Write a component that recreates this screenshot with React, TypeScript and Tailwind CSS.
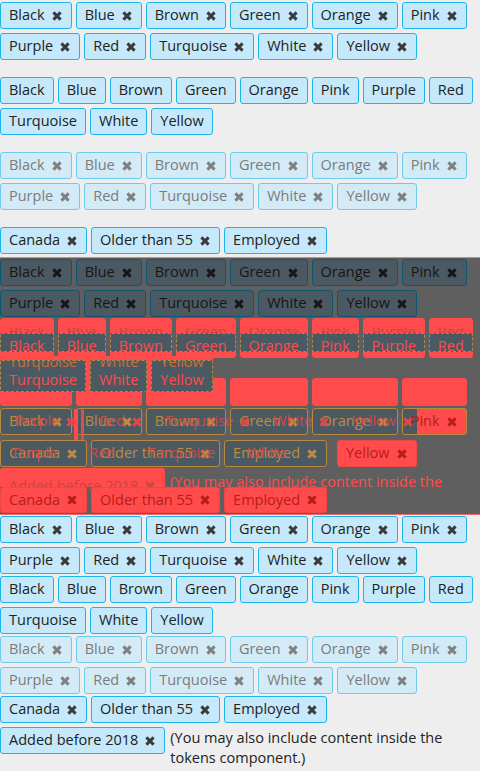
import React from "react";

const COLORS = ["Black", "Blue", "Brown", "Green", "Orange", "Pink", "Purple", "Red", "Turquoise", "White", "Yellow"];
const FILTERS = ["Canada", "Older than 55", "Employed"];

function XIcon({ color }: { color: string }) {
  return (
    <svg width="10" height="10" viewBox="0 0 10 10" className="shrink-0">
      <path d="M1.4 1.4 L8.6 8.6 M8.6 1.4 L1.4 8.6" stroke={color} strokeWidth="2.9" strokeLinecap="butt" />
    </svg>
  );
}

const NORMAL = "bg-[#c5e9fb] border-[#1cb4ec] text-[#222222]";
const DISABLED = "bg-[#d3ebf7] border-[#6ccbef] text-[#7b7b7b]";
const DARK = "bg-[#4b5962] border-[#0c5872] text-[#161616]";
const RED = "bg-[#ff4b4b] border-[#f04646] text-[#b81c1c]";

function Token({
  label,
  x,
  cls = NORMAL,
  icon = "#3a3a3a",
  h = "h-[27px]",
}: {
  label: string;
  x?: boolean;
  cls?: string;
  icon?: string;
  h?: string;
}) {
  return (
    <div className={`inline-flex shrink-0 items-center whitespace-nowrap border rounded-[3px] pl-2 ${x ? "pr-[9px]" : "pr-2"} text-[14.5px] leading-none ${h} ${cls}`}>
      <span>{label}</span>
      {x && (
        <span className="ml-[7px] flex">
          <XIcon color={icon} />
        </span>
      )}
    </div>
  );
}

function List({
  items,
  x,
  cls,
  icon,
  className = "",
}: {
  items: string[];
  x?: boolean;
  cls?: string;
  icon?: string;
  className?: string;
}) {
  return (
    <div className={`flex flex-wrap gap-x-[4px] gap-y-[4px] ${className}`}>
      {items.map((c) => (
        <Token key={c} label={c} x={x} cls={cls} icon={icon} />
      ))}
    </div>
  );
}

/* a band: a token-shaped box showing only part of its text */
function Band({ label, x, h, textCls, pt, faded }: { label: string; x?: boolean; h: string; textCls: string; pt: string; faded?: string }) {
  return (
    <div className={`relative shrink-0 overflow-hidden border border-dashed border-[#b8893c] bg-[#4b5962] rounded-[2px] pl-2 ${x ? "pr-[9px]" : "pr-2"} text-[14.5px] leading-none whitespace-nowrap ${h}`}>
      <div className={`flex items-center ${pt} ${textCls}`}>
        <span>{label}</span>
        {x && (
          <span className="ml-[7px] flex">
            <XIcon color="#ff4b4b" />
          </span>
        )}
      </div>
      {faded && <div className={`absolute left-2 ${faded}`}>{label}</div>}
    </div>
  );
}

function Overlay() {
  const row1 = COLORS.slice(0, 8);
  return (
    <div className="relative mt-[3px] h-[258px] bg-[#5f5f5f] border-t border-t-[#d98c3c] border-b border-b-[#e86a6a] overflow-hidden">
      {/* faded copy of the first list */}
      <List items={COLORS} x cls={DARK} icon="#161616" className="pt-[1px]" />

      {/* red highlight boxes, first layer */}
      <div className="absolute left-0 top-[60px] flex gap-x-[4px]">
        {row1.map((c) => (
          <Token key={c} label={c} cls="bg-[#ff4b4b] border-[#ff4b4b] text-transparent" h="h-[40px]" />
        ))}
      </div>
      <div className="absolute left-0 top-[98px] w-[213px] h-[24px] bg-[#ff4b4b]" />
      <div className="absolute left-0 top-[120px] flex gap-x-[4px]">
        {COLORS.slice(0, 6).map((c) => (
          <Token key={c} label={c} x cls="bg-[#ff4b4b] border-[#ff4b4b] text-transparent" icon="transparent" h="h-[28px]" />
        ))}
      </div>

      {/* faded text tops */}
      <div className="absolute left-0 top-[70px] flex gap-x-[4px] h-[9px] overflow-hidden">
        {row1.map((c) => (
          <div key={c} className="shrink-0 border border-transparent pl-2 pr-2 text-[14.5px] leading-none text-[#c8463c] whitespace-nowrap -mt-[4px]">
            {c}
          </div>
        ))}
      </div>

      {/* list two shifted */}
      <div className="absolute left-0 top-[75px] flex gap-x-[4px]">
        {row1.map((c) => (
          <Band key={c} label={c} h="h-[19px]" textCls="text-[#ff4b4b]" pt="pt-[5px]" />
        ))}
      </div>
      <div className="absolute left-0 top-[102px] flex gap-x-[4px]">
        {["Turquoise", "White", "Yellow"].map((c) => (
          <Band key={c} label={c} h="h-[32px]" textCls="text-[#ff4b4b]" pt="pt-[12px]" faded="top-[-6px] text-[#c8703c]" />
        ))}
      </div>

      {/* overlapping rows */}
      <div className="absolute left-0 top-[150px] flex gap-x-[4px]">
        {COLORS.slice(0, 5).map((c) => (
          <Token key={c} label={c} x cls="bg-[#4b5962] border-[#b8893c] text-[#c08a40]" icon="#c08a40" />
        ))}
        <Token
          label="Pink"
          x
          cls="bg-[linear-gradient(to_right,#4b5962_14px,#ff4b4b_14px)] border-[#b8893c] text-[#b81c1c]"
          icon="#b81c1c"
        />
      </div>
      <div className="absolute left-[6px] top-[150px] flex gap-x-[4px]">
        {COLORS.slice(6, 11).map((c) => (
          <Token key={c} label={c} x cls="bg-transparent border-transparent text-[#e04848]/90" icon="#e04848" />
        ))}
      </div>
      <div className="absolute left-[74px] top-[151px] w-[4px] h-[58px] bg-[#ff4b4b]" />
      <div className="absolute left-[81px] top-[151px] w-[3px] h-[58px] bg-[#ff4b4b]/80" />

      <div className="absolute left-0 top-[182px] flex gap-x-[4px]">
        {FILTERS.map((c) => (
          <Token key={c} label={c} x cls="bg-[#4b5962] border-[#b8893c] text-[#c08a40]" icon="#c08a40" />
        ))}
      </div>
      <div className="absolute left-[4px] top-[182px] flex gap-x-[14px]">
        {["Purple", "Red", "Turquoise", "White"].map((c) => (
          <Token key={c} label={c} cls="bg-transparent border-transparent text-[#e04848]/90" />
        ))}
      </div>
      <div className="absolute left-[337px] top-[182px]">
        <Token label="Yellow" x cls={RED} icon="#b81c1c" />
      </div>

      {/* bottom part */}
      <div className="absolute left-0 top-[210px] w-[165px] h-[19px] bg-[#ff4b4b] rounded-t-[3px]" />
      <div className="absolute left-[9px] top-[221px] text-[14.5px] leading-none text-[#cc4444] flex items-center whitespace-nowrap">
        Added before 2018
        <span className="ml-[7px] flex">
          <XIcon color="#cc4444" />
        </span>
      </div>
      <div className="absolute left-[170px] top-[214px] text-[14.5px] leading-[20px] text-[#ff4b4b] whitespace-nowrap">
        (You may also include content inside the
      </div>
      <div className="absolute left-0 top-[229px] flex gap-x-[4px]">
        {FILTERS.map((c) => (
          <Token key={c} label={c} x cls={RED} icon="#b81c1c" h="h-[26px]" />
        ))}
      </div>
    </div>
  );
}

export default function App() {
  return (
    <div className="min-h-screen w-[480px] bg-[#eeeeee] font-['Open_Sans',sans-serif]">
      <List items={COLORS} x className="pt-[2px]" />
      <List items={COLORS} className="pt-[17px]" />
      <List items={COLORS} x cls={DISABLED} icon="#7f7f7f" className="pt-[17px]" />
      <List items={FILTERS} x className="pt-[17px]" />
      <Overlay />
      <div className="flex flex-col gap-y-[2px] pt-[1px]">
        <List items={COLORS} x />
        <List items={COLORS} />
        <List items={COLORS} x cls={DISABLED} icon="#7f7f7f" />
        <List items={FILTERS} x />
        <div className="flex items-start gap-x-[5px] mt-[2px]">
          <Token label="Added before 2018" x />
          <div className="text-[14.5px] leading-[20px] text-[#222222] pt-[1px]">
            (You may also include content inside the tokens component.)
          </div>
        </div>
      </div>
    </div>
  );
}
